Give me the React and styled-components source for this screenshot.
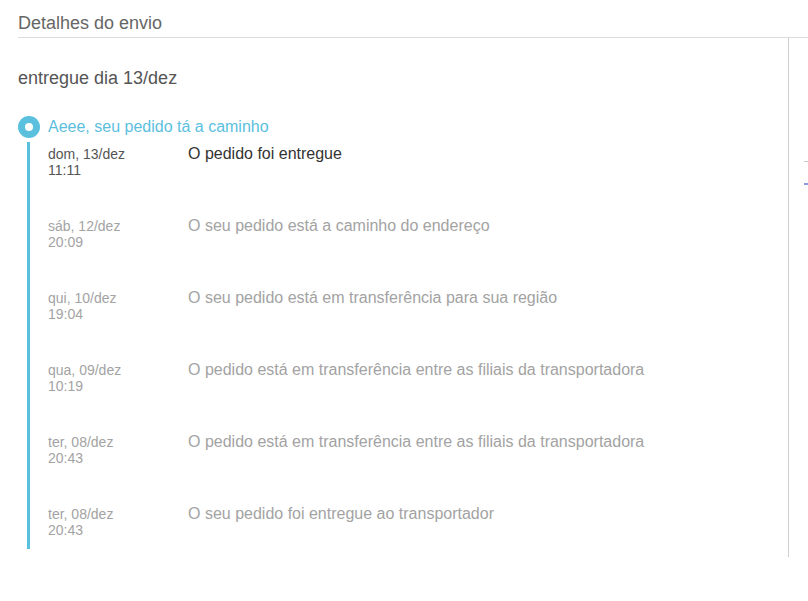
import React from "react";
import styled, { createGlobalStyle } from "styled-components";

const Global = createGlobalStyle`
  html, body { margin: 0; padding: 0; background: #fff; }
  body { font-family: "Liberation Sans", Arial, sans-serif; overflow: hidden; }
`;

const Page = styled.div`
  width: 808px;
  height: 601px;
  padding-left: 18px;
  box-sizing: border-box;
  overflow: hidden;
`;

const Title = styled.h2`
  margin: 0;
  padding: 12px 0 3px;
  font-size: 18px;
  line-height: 22px;
  font-weight: normal;
  color: #666;
  border-bottom: 1px solid #dcdcdc;
`;

const Body = styled.div`
  display: grid;
  grid-template-columns: 771px 1fr;
`;

const Main = styled.section`
  border-right: 1px solid #cfcfcf;
  padding: 29px 0 8px;
`;

const Side = styled.aside`
  padding: 123px 0 0 15px;
  display: flex;
  flex-direction: column;
  gap: 21px;
`;

const SideMark = styled.span`
  display: block;
  width: 4px;
  height: ${(p) => p.$h}px;
  background: ${(p) => p.$color};
`;

const Delivered = styled.h3`
  margin: 0 0 27px;
  font-size: 18px;
  line-height: 22px;
  font-weight: normal;
  color: #555;
`;

const StatusHead = styled.div`
  display: flex;
  align-items: center;
  gap: 8px;
  height: 22px;
  margin-bottom: 4px;
`;

const Dot = styled.span`
  width: 22px;
  height: 22px;
  border-radius: 50%;
  background: #5bc0de;
  display: flex;
  align-items: center;
  justify-content: center;
  flex-shrink: 0;
  &::after {
    content: "";
    width: 8px;
    height: 8px;
    border-radius: 50%;
    background: #fff;
  }
`;

const StatusText = styled.span`
  font-size: 16px;
  line-height: 18px;
  color: #5bc0de;
`;

const Track = styled.ol`
  list-style: none;
  margin: 0 0 0 9px;
  padding: 4px 0 11px 18px;
  border-left: 3px solid #5bc0de;
  display: flex;
  flex-direction: column;
  gap: 40px;
`;

const Event = styled.li`
  display: grid;
  grid-template-columns: 140px 1fr;
  align-items: start;
`;

const When = styled.div`
  font-size: 14px;
  line-height: 16px;
  color: ${(p) => (p.$active ? "#555" : "#a3a3a3")};
`;

const What = styled.div`
  font-size: 16px;
  line-height: 16px;
  color: ${(p) => (p.$active ? "#333" : "#a3a3a3")};
`;

const events = [
  { day: "dom, 13/dez", time: "11:11", text: "O pedido foi entregue", active: true },
  { day: "sáb, 12/dez", time: "20:09", text: "O seu pedido está a caminho do endereço" },
  { day: "qui, 10/dez", time: "19:04", text: "O seu pedido está em transferência para sua região" },
  { day: "qua, 09/dez", time: "10:19", text: "O pedido está em transferência entre as filiais da transportadora" },
  { day: "ter, 08/dez", time: "20:43", text: "O pedido está em transferência entre as filiais da transportadora" },
  { day: "ter, 08/dez", time: "20:43", text: "O seu pedido foi entregue ao transportador" },
];

export default function App() {
  return (
    <>
      <Global />
      <Page>
        <Title>Detalhes do envio</Title>
        <Body>
          <Main>
            <Delivered>entregue dia 13/dez</Delivered>
            <StatusHead>
              <Dot />
              <StatusText>Aeee, seu pedido tá a caminho</StatusText>
            </StatusHead>
            <Track>
              {events.map((e, i) => (
                <Event key={i}>
                  <When $active={e.active}>
                    {e.day}
                    <br />
                    {e.time}
                  </When>
                  <What $active={e.active}>{e.text}</What>
                </Event>
              ))}
            </Track>
          </Main>
          <Side>
            <SideMark $h={1} $color="#c8c8c8" />
            <SideMark $h={2} $color="#8a9be6" />
          </Side>
        </Body>
      </Page>
    </>
  );
}
